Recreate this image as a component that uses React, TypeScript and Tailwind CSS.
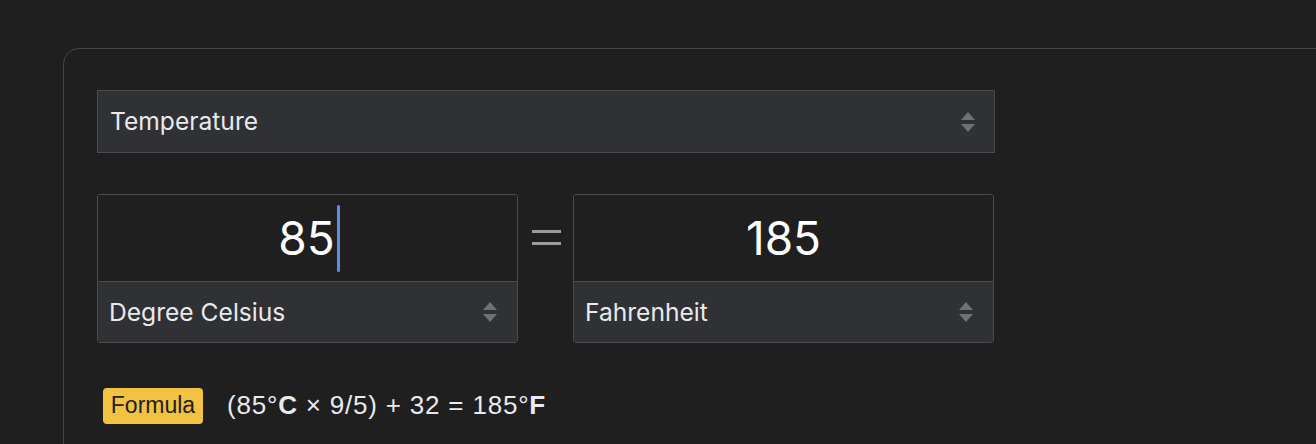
import React from "react";

function Arrows() {
  return (
    <svg width="16" height="24" viewBox="0 0 16 24" className="shrink-0">
      <path d="M8 2 L15 10 L1 10 Z" fill="#6f7074" />
      <path d="M1 14 L15 14 L8 22 Z" fill="#6f7074" />
    </svg>
  );
}

export default function App() {
  return (
    <div
      className="w-[1316px] h-[444px] overflow-hidden bg-[#1f1f1f] pt-[48px] pl-[63px]"
      style={{ fontFamily: "Inter, Roboto, 'Liberation Sans', sans-serif" }}
    >
      <div className="w-[1400px] h-[500px] border border-[#444547] rounded-tl-[16px] pt-[41px] pl-[33px]">
        <div className="w-[898px] h-[63px] bg-[#303134] border border-[#4a4b4e] flex items-center justify-between pl-[12px] pr-[18px]">
          <span className="text-[24.6px] text-[#e8eaed]">Temperature</span>
          <Arrows />
        </div>
        <div className="flex items-start mt-[41px]">
          <div className="w-[421px] h-[149px] border border-[#4a4b4e] rounded-[3px] flex flex-col overflow-hidden">
            <div className="h-[86px] bg-[#1f1f1f] flex items-center justify-center">
              <span className="text-[46px] text-white leading-none ml-[3px]">85</span>
              <span className="w-[3px] h-[67px] bg-[#5b8def] rounded-full ml-[2px]" />
            </div>
            <div className="flex-1 bg-[#303134] border-t border-[#4a4b4e] flex items-center justify-between pl-[11px] pr-[19px]">
              <span className="text-[24.6px] text-[#e8eaed]">Degree Celsius</span>
              <Arrows />
            </div>
          </div>
          <div className="w-[55px] h-[86px] flex flex-col items-center justify-center gap-[9px] pl-[1px]">
            <div className="w-[29px] h-[3px] bg-[#9a9b9e]" />
            <div className="w-[29px] h-[3px] bg-[#9a9b9e]" />
          </div>
          <div className="w-[421px] h-[149px] border border-[#4a4b4e] rounded-[3px] flex flex-col overflow-hidden">
            <div className="h-[86px] bg-[#1f1f1f] flex items-center justify-center">
              <span className="text-[46px] text-white leading-none">185</span>
            </div>
            <div className="flex-1 bg-[#303134] border-t border-[#4a4b4e] flex items-center justify-between pl-[11px] pr-[19px]">
              <span className="text-[24.6px] text-[#e8eaed]">Fahrenheit</span>
              <Arrows />
            </div>
          </div>
        </div>
        <div
          className="flex items-center mt-[43px] ml-[6px]"
          style={{ fontFamily: "'Liberation Sans', Arial, sans-serif" }}
        >
          <span className="h-[36px] w-[100px] bg-[#f2c343] rounded-[4px] flex items-center justify-center text-[23px] text-[#202124]">
            Formula
          </span>
          <span className="ml-[24px] text-[26px] tracking-[0.8px] text-[#e8eaed]">
            (85°<b>C</b> × 9/5) + 32 = 185°<b>F</b>
          </span>
        </div>
      </div>
    </div>
  );
}
